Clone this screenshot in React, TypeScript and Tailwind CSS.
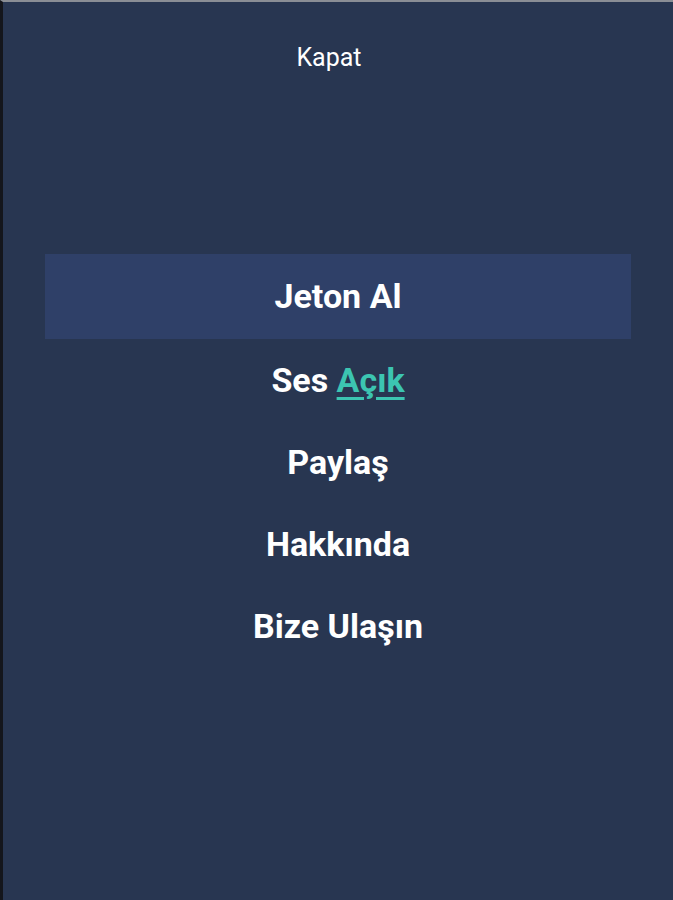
import React from "react";

export default function App() {
  const items = ["Paylaş", "Hakkında", "Bize Ulaşın"];
  return (
    <div
      className="w-[673px] h-[900px] bg-[#283651] border-t-2 border-t-[#8a8e95] border-l-[3px] border-l-[#14161c] flex flex-col overflow-hidden"
      style={{ fontFamily: "Roboto, 'Noto Sans', sans-serif" }}
    >
      <div className="h-[114px] flex justify-center pr-[18px] pt-[41px]">
        <span className="text-[25px] leading-[30px] text-white">Kapat</span>
      </div>
      <div className="mt-[138px] px-[42px] flex flex-col">
        <div className="h-[85px] bg-[#2f4068] flex items-center justify-center">
          <span className="text-[34px] font-bold text-white">Jeton Al</span>
        </div>
        <div className="h-[82px] flex items-center justify-center">
          <span className="text-[34px] font-bold text-white">
            Ses <span className="text-[#3cc5b1] underline decoration-[3px] underline-offset-[5px]">Açık</span>
          </span>
        </div>
        {items.map((t) => (
          <div key={t} className="h-[82px] flex items-center justify-center">
            <span className="text-[34px] font-bold text-white">{t}</span>
          </div>
        ))}
      </div>
    </div>
  );
}
